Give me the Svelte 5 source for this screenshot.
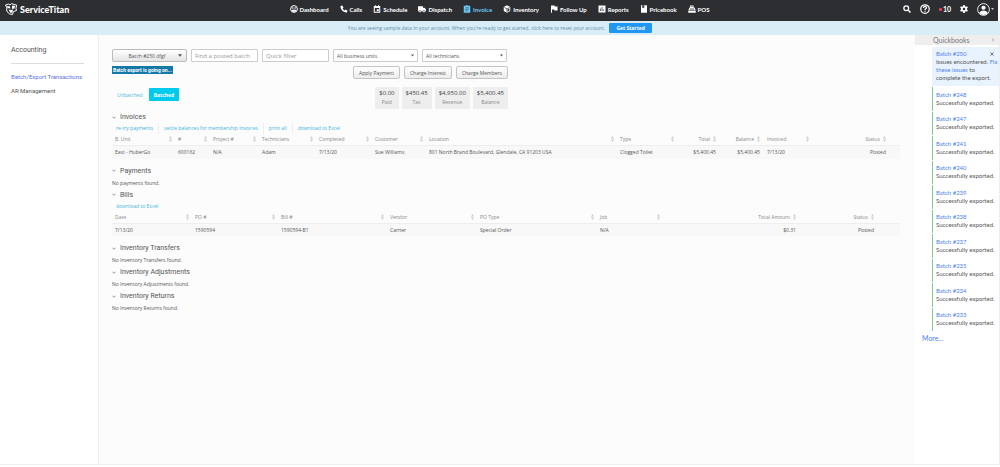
<script lang="ts">
    type Column = {
        label: string;
        width: number;
        right?: boolean;
    };

    const navItems = [
        { label: "Dashboard", icon: "dashboard" },
        { label: "Calls", icon: "calls" },
        { label: "Schedule", icon: "schedule" },
        { label: "Dispatch", icon: "dispatch" },
        { label: "Invoice", icon: "invoice" },
        { label: "Inventory", icon: "inventory" },
        { label: "Follow Up", icon: "followup" },
        { label: "Reports", icon: "reports" },
        { label: "Pricebook", icon: "pricebook" },
        { label: "POS", icon: "pos" },
    ];

    const totals = [
        { value: "$0.00", label: "Paid" },
        { value: "$450.45", label: "Tax" },
        { value: "$4,950.00", label: "Revenue" },
        { value: "$5,400.45", label: "Balance" },
    ];

    // Column widths are relative, they are turned into percentages below
    const invoiceColumns: Column[] = [
        { label: "B. Unit", width: 63 },
        { label: "#", width: 35 },
        { label: "Project #", width: 49 },
        { label: "Technicians", width: 57 },
        { label: "Completed", width: 56 },
        { label: "Customer", width: 54 },
        { label: "Location", width: 191 },
        { label: "Type", width: 60 },
        { label: "Total", width: 43, right: true },
        { label: "Balance", width: 44, right: true },
        { label: "Invoiced", width: 48 },
        { label: "Status", width: 78, right: true },
        { label: "", width: 10 },
    ];

    const invoiceRows = [
        [
            "East - HuberGo",
            "600162",
            "N/A",
            "Adam",
            "7/13/20",
            "Sue Williams",
            "801 North Brand Boulevard, Glendale, CA 91203 USA",
            "Clogged Toilet",
            "$5,400.45",
            "$5,400.45",
            "7/13/20",
            "Posted",
            "",
        ],
    ];

    const billColumns: Column[] = [
        { label: "Date", width: 80 },
        { label: "PO #", width: 86 },
        { label: "Bill #", width: 109 },
        { label: "Vendor", width: 90 },
        { label: "PO Type", width: 120 },
        { label: "Job", width: 66 },
        { label: "Total Amount", width: 137, right: true },
        { label: "Status", width: 78, right: true },
        { label: "", width: 22 },
    ];

    const billRows = [
        ["7/13/20", "1590594", "1590594-B1", "Carrier", "Special Order", "N/A", "$0.31", "Posted", ""],
    ];

    const sections = [
        {
            title: "Invoices",
            links: ["re-try payments", "settle balances for membership invoices", "print all", "download to Excel"],
            columns: invoiceColumns,
            rows: invoiceRows,
        },
        { title: "Payments", empty: "No payments found." },
        { title: "Bills", links: ["download to Excel"], columns: billColumns, rows: billRows },
        { title: "Inventory Transfers", empty: "No Inventory Transfers found." },
        { title: "Inventory Adjustments", empty: "No Inventory Adjustments found." },
        { title: "Inventory Returns", empty: "No Inventory Returns found." },
    ];

    const exportedBatches = [248, 247, 241, 240, 239, 238, 237, 235, 234, 233];

    function percent(column: Column, columns: Column[]): number {
        const total = columns.reduce((sum, c) => sum + c.width, 0);
        return (column.width / total) * 100;
    }
</script>

{#snippet navIcon(name: string)}
    <svg class="nav-icon" viewBox="0 0 16 16" aria-hidden="true">
        {#if name === "dashboard"}
            <circle cx="8" cy="8" r="6.8" fill="none" stroke="currentColor" stroke-width="2" />
            <circle cx="5.6" cy="6" r="1.6" fill="currentColor" />
            <circle cx="10.4" cy="6" r="1.6" fill="currentColor" />
            <path d="M3 11c3-3 7-3 10 0l-2 2.500H5z" fill="currentColor" />
        {:else if name === "calls"}
            <path d="M1 2l3.500-1 2.500 4-1.800 2c.8 1.700 2 2.900 3.800 3.800l2-1.800 4 2.500-1 3.500C7 15.500.500 9 1 2z" fill="currentColor" />
        {:else if name === "schedule"}
            <path d="M1.500 2H4V.5h2V2h4V.5h2V2h2.500v13.500h-13zM3.500 6v7.500h9V6z" fill="currentColor" fill-rule="evenodd" />
            <path d="M7.500 8.500h4v4h-4z" fill="currentColor" />
        {:else if name === "dispatch"}
            <path d="M0 2.500h10v3h3l3 3.500v4H0z" fill="currentColor" />
            <circle cx="4" cy="13" r="2.200" fill="currentColor" stroke="#2d2e32" />
            <circle cx="12" cy="13" r="2.200" fill="currentColor" stroke="#2d2e32" />
        {:else if name === "invoice"}
            <path d="M1.500 1.500h4.200L8 0l2.300 1.500h4.200v14h-13z" fill="currentColor" />
            <path d="M4.500 5.500h7M4.500 8.500h7M4.500 11.500h4.500" stroke="#2d5a74" stroke-width="1.300" />
        {:else if name === "inventory"}
            <path d="M8 .5l6.500 3.600v7.800L8 15.500l-6.500-3.600V4.100z" fill="currentColor" />
            <path d="M3 5l5 3 5-3M8 8v6" fill="none" stroke="#2d2e32" stroke-width="1.500" />
            <path d="M9.500 9l3.500-2v4l-3.500 2z" fill="#2d2e32" />
        {:else if name === "followup"}
            <path d="M2 1h7l1 2h5v8H9L8 9H4v6.500H2z" fill="currentColor" />
        {:else if name === "reports"}
            <path d="M1 1h14v14H1z" fill="currentColor" />
            <path d="M4.800 12V7M8 12V4M11.200 12V9" stroke="#2d2e32" stroke-width="1.500" />
        {:else if name === "pricebook"}
            <path d="M2 .5h12v15H2z" fill="currentColor" />
            <path d="M4.500.5v6l2-1.500 2 1.500v-6z" fill="#2d2e32" />
        {:else}
            <path d="M4 1h7v4h2l2.500 6H.5L3 5h1zM.5 12h15v3.500H.5z" fill="currentColor" />
            <path d="M5.500 3h4M4 7.500h8M3.500 9.500h9" stroke="#2d2e32" />
        {/if}
    </svg>
{/snippet}

{#snippet sortIcon()}
    <svg class="sort" viewBox="0 0 6 12" aria-hidden="true">
        <path d="M3 0l3 5H0zM3 12l3-5H0z" fill="currentColor" />
    </svg>
{/snippet}

<div class="page">
    <header class="topbar">
        <a class="brand" href="#home">
            <svg viewBox="0 0 24 24" aria-hidden="true">
                <path
                    d="M1 4l6-2 3 2 3-3 5 2 5 1-1 7 1 4-6 2-2 6-6-1-4-4-2-4 1-4z"
                    fill="none"
                    stroke="#fff"
                    stroke-width="2"
                    stroke-linejoin="round"
                />
                <path d="M4 6l6 1 1 4-6-1zM14 5l6 1-1 5-5 1zM7 13l5 1 4-1-1 6-4 1z" fill="#fff" />
            </svg>
            <span>ServiceTitan</span>
        </a>
        <nav class="main-nav">
            {#each navItems as item}
                <a href="#{item.icon}" class:active={item.icon === "invoice"}>
                    {@render navIcon(item.icon)}
                    {item.label}
                </a>
            {/each}
        </nav>
        <div class="tools">
            <button aria-label="Search">
                <svg viewBox="0 0 16 16"><path d="M10.500 10.500L15 15" stroke="currentColor" stroke-width="3" /><circle cx="6.500" cy="6.500" r="4.800" fill="none" stroke="currentColor" stroke-width="2.500" /></svg>
            </button>
            <button aria-label="Help">
                <svg class="help" viewBox="0 0 20 20"><circle cx="10" cy="10" r="8.500" fill="none" stroke="currentColor" stroke-width="2.500" /><path d="M7 8c0-4 6-4 6-.5 0 2-3 2-3 4.500M10 13.500v2" fill="none" stroke="currentColor" stroke-width="2.500" /></svg>
            </button>
            <button class="alerts" aria-label="Notifications"><i></i>10</button>
            <button aria-label="Settings">
                <svg viewBox="0 0 16 16"><path d="M6.500 0h3l.5 2.300 2 1 2.200-.8 1.500 2.700L14 7v2l1.700 1.700-1.500 2.700-2.200-.7-2 1L9.500 16h-3L6 13.700l-2-1-2.200.7-1.500-2.700L2 9V7L.3 5.200l1.500-2.700 2.200.8 2-1zM8 5.500a2.500 2.500 0 100 5 2.500 2.500 0 000-5z" fill="currentColor" fill-rule="evenodd" /></svg>
            </button>
            <button class="account" aria-label="Account">
                <svg class="avatar" viewBox="0 0 26 26"><circle cx="13" cy="13" r="11.800" fill="none" stroke="currentColor" stroke-width="1.800" /><circle cx="13" cy="9.500" r="4.200" fill="currentColor" /><path d="M4.500 20c2-7 15-7 17 0-4 5-13 5-17 0z" fill="currentColor" /></svg>
                <svg class="caret" viewBox="0 0 8 4"><path d="M0 0h8L4 4z" fill="currentColor" /></svg>
            </button>
        </div>
    </header>

    <div class="banner">
        <span>You are seeing sample data in your account. When you're ready to get started, click here to reset your account.</span>
        <button>Get Started</button>
    </div>

    <div class="body">
        <aside class="sidebar">
            <h2>Accounting</h2>
            <a class="current" href="#batch">Batch/Export Transactions</a>
            <a href="#ar">AR Management</a>
        </aside>

        <main>
            <div class="filters">
                <div class="select batch">
                    <select aria-label="Batch"><option>Batch #250 dfgf</option></select>
                    <svg viewBox="0 0 8 5" aria-hidden="true"><path d="M0 0h8L4 5z" fill="currentColor" /></svg>
                </div>
                <input type="text" placeholder="Find a posted batch" aria-label="Find a posted batch" />
                <input type="text" placeholder="Quick filter" aria-label="Quick filter" />
                <div class="select">
                    <select aria-label="Business unit"><option>All business units</option></select>
                    <svg viewBox="0 0 8 5" aria-hidden="true"><path d="M0 0h8L4 5z" fill="currentColor" /></svg>
                </div>
                <div class="select">
                    <select aria-label="Technician"><option>All technicians</option></select>
                    <svg viewBox="0 0 8 5" aria-hidden="true"><path d="M0 0h8L4 5z" fill="currentColor" /></svg>
                </div>
            </div>

            <div class="toolbar">
                <span class="notice">Batch export is going on...</span>
                <div class="actions">
                    <button>Apply Payment</button>
                    <button>Charge Interest</button>
                    <button>Charge Members</button>
                </div>
            </div>

            <div class="summary">
                <div class="toggle">
                    <button>Unbatched</button>
                    <button class="on">Batched</button>
                </div>
                <div class="totals">
                    {#each totals as total}
                        <div class="total">
                            <strong>{total.value}</strong>
                            <span>{total.label}</span>
                        </div>
                    {/each}
                </div>
            </div>

            {#each sections as section}
                <section>
                    <h3>
                        <svg viewBox="0 0 10 6" aria-hidden="true"><path d="M1 1l4 4 4-4" fill="none" stroke="currentColor" stroke-width="1.500" /></svg>
                        {section.title}
                    </h3>
                    {#if section.columns}
                        <div class="links">
                            {#each section.links as link}
                                <a href="#action">{link}</a>
                            {/each}
                        </div>
                        <table>
                            <colgroup>
                                {#each section.columns as column}
                                    <col style="width: {percent(column, section.columns)}%" />
                                {/each}
                            </colgroup>
                            <thead>
                                <tr>
                                    {#each section.columns as column}
                                        <th class:right={column.right}>
                                            {#if column.label}
                                                <div class="head">
                                                    <span>{column.label}</span>
                                                    {@render sortIcon()}
                                                </div>
                                            {/if}
                                        </th>
                                    {/each}
                                </tr>
                            </thead>
                            <tbody>
                                {#each section.rows as row}
                                    <tr>
                                        {#each row as cell, i}
                                            <td class:right={section.columns[i].right}>{cell}</td>
                                        {/each}
                                    </tr>
                                {/each}
                            </tbody>
                        </table>
                    {:else}
                        <p>{section.empty}</p>
                    {/if}
                </section>
            {/each}
        </main>

        <aside class="quickbooks">
            <h2>
                Quickbooks
                <svg viewBox="0 0 6 10" aria-hidden="true"><path d="M1 1l4 4-4 4" fill="none" stroke="currentColor" stroke-width="2" /></svg>
            </h2>
            <div class="issue">
                <div class="issue-head">
                    <a href="#250">Batch #250</a>
                    <button aria-label="Dismiss">
                        <svg viewBox="0 0 10 10"><path d="M1 1l8 8M9 1L1 9" stroke="currentColor" stroke-width="2" /></svg>
                    </button>
                </div>
                <p>Issues encountered. <a href="#fix">Fix these issues</a> to complete the export.</p>
            </div>
            <ul>
                {#each exportedBatches as batch}
                    <li>
                        <a href="#{batch}">Batch #{batch}</a>
                        <span>Successfully exported.</span>
                    </li>
                {/each}
            </ul>
            <a class="more" href="#more">More...</a>
        </aside>
    </div>
</div>

<style>
    :global(body) {
        background: #fff;
    }

    .page {
        display: flex;
        flex-direction: column;
        box-sizing: border-box;
        min-height: 100vh;
        padding-bottom: 2px;
        font-family: "Open Sans", "Noto Sans", sans-serif;
        font-size: 5px;
        color: #555;
    }

    .page :global(*) {
        box-sizing: border-box;
    }

    a {
        color: #4c82ee;
        text-decoration: none;
    }

    button,
    input,
    select {
        margin: 0;
        padding: 0;
        border: 0;
        background: none;
        color: inherit;
        font: inherit;
    }

    svg {
        display: block;
        flex: none;
    }

    h2,
    h3,
    p,
    ul {
        margin: 0;
        padding: 0;
        font-weight: 400;
        list-style: none;
    }

    /* Top bar */
    .topbar {
        display: grid;
        grid-template-columns: 1fr auto 1fr;
        align-items: center;
        height: 21px;
        margin-right: 2px;
        padding: 0 4px 3px 5px;
        background: #2d2e32;
        color: #fff;
    }

    .brand {
        display: flex;
        align-items: center;
        gap: 3px;
        color: #fff;
        font-family: Lato, sans-serif;
        font-size: 9px;
        font-weight: 900;
    }

    .brand svg {
        width: 12px;
        height: 12px;
    }

    .main-nav {
        display: flex;
        gap: 11px;
    }

    .main-nav a {
        display: flex;
        align-items: center;
        gap: 2px;
        color: #fff;
        font-family: Lato, sans-serif;
        font-size: 6px;
        font-weight: 700;
    }

    .main-nav a.active {
        color: #6cc8f5;
    }

    .nav-icon {
        width: 8px;
        height: 8px;
    }

    .tools {
        display: flex;
        align-items: center;
        justify-content: flex-end;
        gap: 9px;
    }

    .tools svg {
        width: 8px;
        height: 8px;
    }

    .tools .help {
        width: 10px;
        height: 10px;
    }

    .alerts {
        display: flex;
        align-items: center;
        gap: 1px;
        font-family: Lato, sans-serif;
        font-size: 7px;
        font-weight: 700;
    }

    .alerts i {
        width: 3px;
        height: 3px;
        border-radius: 1px;
        background: #e8424c;
    }

    .account {
        display: flex;
        align-items: center;
        gap: 1px;
    }

    .tools .avatar {
        width: 13px;
        height: 13px;
    }

    .tools .caret {
        width: 3px;
        height: 2px;
    }

    /* Sample data banner */
    .banner {
        display: flex;
        align-items: center;
        justify-content: center;
        gap: 4px;
        height: 14px;
        background: #d9edf7;
        color: #5b8fb0;
    }

    .banner button {
        width: 43px;
        height: 10px;
        border-radius: 1px;
        background: #2196f3;
        color: #fff;
        font-weight: 700;
    }

    .body {
        display: flex;
        flex: 1;
        border-bottom: 1px solid #eee;
    }

    /* Left menu */
    .sidebar {
        display: flex;
        flex-direction: column;
        flex: none;
        width: 99px;
        padding: 10px 14px 0 11px;
        border-right: 1px solid #eee;
        font-family: Roboto, sans-serif;
        font-size: 6px;
        line-height: 14px;
    }

    .sidebar h2 {
        margin-bottom: 6px;
        padding-bottom: 8px;
        border-bottom: 1px solid #ddd;
        font-size: 7px;
        line-height: 10px;
    }

    .sidebar a {
        color: #555;
        white-space: nowrap;
    }

    .sidebar a.current {
        color: #5b6fe6;
    }

    main {
        flex: 1;
        min-width: 0;
        padding: 14px 15px 0 13px;
        background: #fcfcfc;
    }

    /* Filters */
    .filters {
        display: grid;
        grid-template-columns: 75px 67px 67px 85px 85px;
        gap: 4px;
        height: 13px;
    }

    .filters input,
    .filters select {
        width: 100%;
        height: 13px;
        padding: 0 3px;
        border: 1px solid #ccc;
        border-radius: 1px;
        background: #fff;
    }

    .filters input {
        font-size: 6px;
    }

    .filters input::placeholder {
        color: #999;
    }

    .select {
        position: relative;
    }

    .select select {
        appearance: none;
    }

    .select svg {
        position: absolute;
        top: 5px;
        right: 4px;
        width: 3px;
        height: 3px;
        pointer-events: none;
    }

    .batch select {
        padding-right: 8px;
        border-color: #bbb;
        border-radius: 2px;
        background: linear-gradient(#fff, #e4e4e4);
        text-align-last: center;
    }

    .batch svg {
        right: 5px;
        width: 4px;
    }

    .toolbar,
    .summary {
        display: flex;
        align-items: flex-start;
        justify-content: space-between;
        width: 396px;
    }

    .toolbar {
        padding-top: 4px;
    }

    .notice {
        padding: 0 1px;
        background: #1478a8;
        color: #fff;
        font-family: Roboto, sans-serif;
        font-weight: 700;
        line-height: 8px;
    }

    .actions {
        display: flex;
        gap: 4px;
    }

    .actions button {
        height: 13px;
        padding: 0 5px;
        border: 1px solid #c4c4c4;
        border-radius: 2px;
        background: linear-gradient(#fff, #ececec);
    }

    .summary {
        padding-top: 8px;
    }

    .toggle {
        display: flex;
        gap: 1px;
        padding-top: 1px;
    }

    .toggle button {
        height: 13px;
        padding: 0 5px;
        color: #4cbbe0;
    }

    .toggle button.on {
        border-radius: 1px;
        background: #00cbee;
        color: #fff;
        font-weight: 700;
    }

    .totals {
        display: flex;
        gap: 3px;
    }

    .total {
        display: flex;
        flex-direction: column;
        align-items: center;
        height: 22px;
        padding: 2px 4px 0;
        border-radius: 1px;
        background: #eee;
        line-height: 9px;
    }

    .total strong {
        font-size: 6px;
        font-weight: 400;
        color: #444;
    }

    .total span {
        color: #888;
    }

    /* Sections */
    section h3 {
        display: flex;
        align-items: center;
        gap: 4px;
        color: #555;
        font-family: Roboto, sans-serif;
        font-size: 7px;
        line-height: 12px;
    }

    section h3 svg {
        width: 4px;
        height: 3px;
    }

    section p {
        line-height: 12px;
    }

    .summary + section {
        padding-top: 2px;
    }

    .links {
        display: flex;
        padding-left: 4px;
        line-height: 11px;
    }

    .links a {
        color: #3fb4e0;
    }

    .links a + a {
        margin-left: 5px;
        padding-left: 5px;
        border-left: 1px solid #eee;
    }

    table {
        width: 100%;
        margin-bottom: 6px;
        border-collapse: collapse;
        table-layout: fixed;
        line-height: 10px;
    }

    th,
    td {
        padding: 0 3px;
        font-weight: 400;
        text-align: left;
        white-space: nowrap;
    }

    th {
        padding-bottom: 1px;
        color: #888;
    }

    td {
        height: 13px;
        border-top: 1px solid #eee;
        background: #f8f8f8;
    }

    .right {
        padding-right: 4px;
        text-align: right;
    }

    .head {
        display: flex;
        align-items: center;
        justify-content: space-between;
    }

    .right .head {
        justify-content: flex-end;
        gap: 3px;
    }

    .sort {
        width: 3px;
        height: 6px;
        color: #ccc;
    }

    /* Export status */
    .quickbooks {
        flex: none;
        width: 85px;
        border-right: 1px solid #eee;
        font-family: Lato, sans-serif;
        font-size: 6px;
        line-height: 8px;
    }

    .quickbooks h2 {
        display: flex;
        align-items: center;
        justify-content: space-between;
        height: 10px;
        padding: 0 5px 0 18px;
        background: #eee;
        color: #777;
        font-size: 7px;
    }

    .quickbooks h2 svg {
        width: 2px;
        height: 4px;
    }

    .issue {
        margin: 2px 0 1px 17px;
        padding: 3px 1px 4px 4px;
        background: #e9f3ff;
    }

    .issue-head {
        display: flex;
        align-items: center;
        justify-content: space-between;
        padding-right: 4px;
    }

    .issue-head svg {
        width: 4px;
        height: 4px;
    }

    .quickbooks ul {
        display: grid;
        grid-auto-rows: 1fr;
        row-gap: 1px;
        min-height: 244px;
        margin-left: 17px;
    }

    .quickbooks li {
        display: flex;
        flex-direction: column;
        justify-content: center;
        padding-left: 3px;
        border-left: 1px solid #7fc796;
    }

    .more {
        display: block;
        padding: 3px 0 0 7px;
        font-size: 7px;
    }
</style>
